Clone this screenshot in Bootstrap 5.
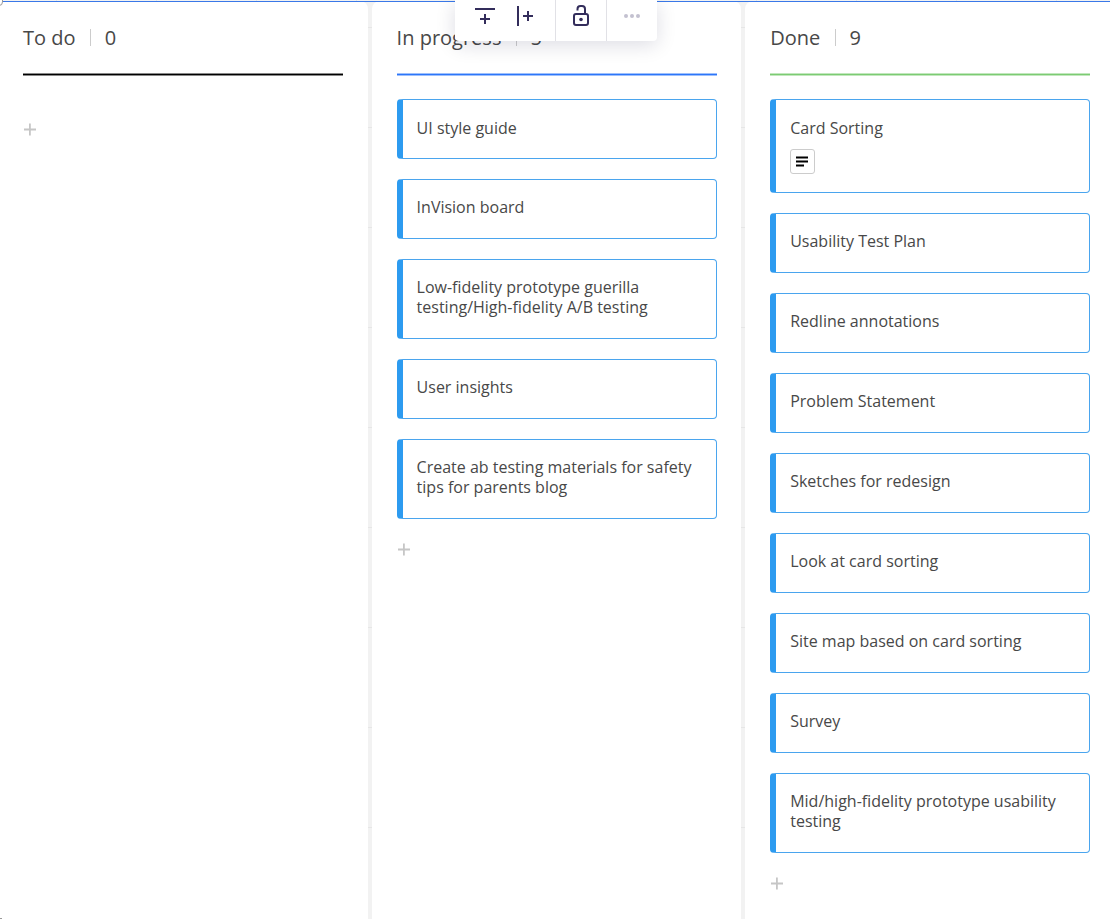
<!DOCTYPE html>
<html lang="en">
<head>
<meta charset="utf-8">
<meta name="viewport" content="width=device-width, initial-scale=1">
<title>Kanban board</title>
<link href="https://cdn.jsdelivr.net/npm/bootstrap@5.3.0/dist/css/bootstrap.min.css" rel="stylesheet">
<style>
  body {
    height: 919px;
    font-family: "Open Sans", sans-serif;
    font-weight: 400;
    color: #484848;
    background:
      repeating-linear-gradient(to bottom, transparent 0 27px, #e6e6e6 27px 28px, transparent 28px 100px),
      repeating-linear-gradient(to right, transparent 0 56px, #e6e6e6 56px 57px, transparent 57px 100px),
      #f2f2f2;
  }
  .board { height: 919px; padding-top: 1px; gap: 4px; margin-left: -2px; }
  .frame-line { top: 1px; left: 2px; right: 0; height: 1px; background: #3a78e8; z-index: 2; }
  .frame-handle { top: -8px; left: -11px; width: 14px; height: 14px; border: 1px solid #999; border-radius: 4px; background: #fff; z-index: 3; }
  .frame-foot { left: 0; bottom: 0; width: 2px; height: 1px; background: #999; z-index: 3; }
  .lane { width: 369.6px; background: #fff; border-radius: 8px 8px 0 0; padding: 0 24.6px 0 25px; }
  .lane-head { height: 72px; font-size: 20px; line-height: 28px; padding-top: 23px; }
  .lane-sep { width: 1px; height: 17px; background: #ccc; margin: 5px 13.6px 0 14.6px; }
  .lane-rule { height: 3px; border: solid #fff8; border-width: 1px 0; }
  .rule-todo { background: #000; }
  .rule-progress { background: #2d76f9; }
  .rule-done { background: #7ccb73; }
  .task {
    border: 1px solid #4aa5ee;
    border-left: 6px solid #2d9bf0;
    border-radius: 4px;
    min-height: 60px;
    padding: 17px 14px 21px;
    font-size: 16px;
    line-height: 20px;
  }
  .task:first-child { padding-top: 18px; padding-bottom: 20px; }
  .tasks { gap: 20px; padding-top: 23px; }
  .note-chip { width: 25px; height: 25px; border: 1px solid #ccc; border-radius: 3px; margin: 11px 0 -2px -.5px; }
  .toolbar { top: 0; left: 455px; width: 202px; height: 41px; border-radius: 0 0 4px 4px; background: #fff; box-shadow: 0 4px 20px rgba(5,0,56,.14); z-index: 4; }
  .tool-group { border-right: 1px solid #e1e1e6; }
</style>
</head>
<body class="position-relative overflow-hidden">
  <div class="frame-line position-absolute"></div>
  <div class="frame-handle position-absolute"></div>
  <div class="frame-foot position-absolute"></div>

  <main class="board d-flex">
    <section class="lane flex-shrink-0">
      <header class="lane-head d-flex align-items-start"><span>To do</span><i class="lane-sep"></i><span>0</span></header>
      <div class="lane-rule rule-todo"></div>
      <div class="tasks d-flex flex-column">
        <svg class="mt-4" width="13" height="13"><path d="M6.9 .5v12M1 6.5h12" stroke="#c6c6c6" stroke-width="1.8"/></svg>
      </div>
    </section>

    <section class="lane flex-shrink-0">
      <header class="lane-head d-flex align-items-start"><span>In progress</span><i class="lane-sep"></i><span>5</span></header>
      <div class="lane-rule rule-progress"></div>
      <div class="tasks d-flex flex-column">
        <div class="task">UI style guide</div>
        <div class="task">InVision board</div>
        <div class="task">Low-fidelity prototype guerilla testing/High-fidelity A/B testing</div>
        <div class="task">User insights</div>
        <div class="task">Create ab testing materials for safety tips for parents blog</div>
        <svg class="mt-1" width="13" height="13"><path d="M6.9 .5v12M1 6.5h12" stroke="#c6c6c6" stroke-width="1.8"/></svg>
      </div>
    </section>

    <section class="lane flex-shrink-0">
      <header class="lane-head d-flex align-items-start"><span>Done</span><i class="lane-sep"></i><span>9</span></header>
      <div class="lane-rule rule-done"></div>
      <div class="tasks d-flex flex-column">
        <div class="task">Card Sorting
          <div class="note-chip d-flex align-items-center justify-content-center">
            <svg width="12" height="11"><path d="M0 1.5h12M0 5.5h12M0 9.5h8" stroke="#000" stroke-width="2"/></svg>
          </div>
        </div>
        <div class="task">Usability Test Plan</div>
        <div class="task">Redline annotations</div>
        <div class="task">Problem Statement</div>
        <div class="task">Sketches for redesign</div>
        <div class="task">Look at card sorting</div>
        <div class="task">Site map based on card sorting</div>
        <div class="task">Survey</div>
        <div class="task">Mid/high-fidelity prototype usability testing</div>
        <svg class="mt-1" width="13" height="13"><path d="M6.9 .5v12M1 6.5h12" stroke="#c6c6c6" stroke-width="1.8"/></svg>
      </div>
    </section>
  </main>

  <div class="toolbar position-absolute d-flex">
    <div class="tool-group d-flex" style="width:101px">
      <svg width="100" height="41" fill="none" stroke="#332d5b" stroke-width="2">
        <path d="M20 9h20M30 14v10M25 19h10"/>
        <path d="M63 6v20M68 16h10M73 11v10"/>
      </svg>
    </div>
    <div class="tool-group d-flex" style="width:51px">
      <svg width="50" height="41" fill="none" stroke="#332d5b" stroke-width="2">
        <rect x="18" y="14" width="14" height="11" rx="2"/>
        <path d="M21.500 10.500V9a3 3 0 0 1 3-3h1.500a3 3 0 0 1 3 3V14"/>
        <circle cx="25" cy="19.5" r="1.8" fill="#332d5b" stroke="none"/>
      </svg>
    </div>
    <svg width="50" height="41" fill="#c3c1d0"><circle cx="19" cy="16" r="2"/><circle cx="25" cy="16" r="2"/><circle cx="31" cy="16" r="2"/></svg>
  </div>
<script src="https://cdn.jsdelivr.net/npm/bootstrap@5.3.0/dist/js/bootstrap.bundle.min.js"></script>
</body>
</html>
